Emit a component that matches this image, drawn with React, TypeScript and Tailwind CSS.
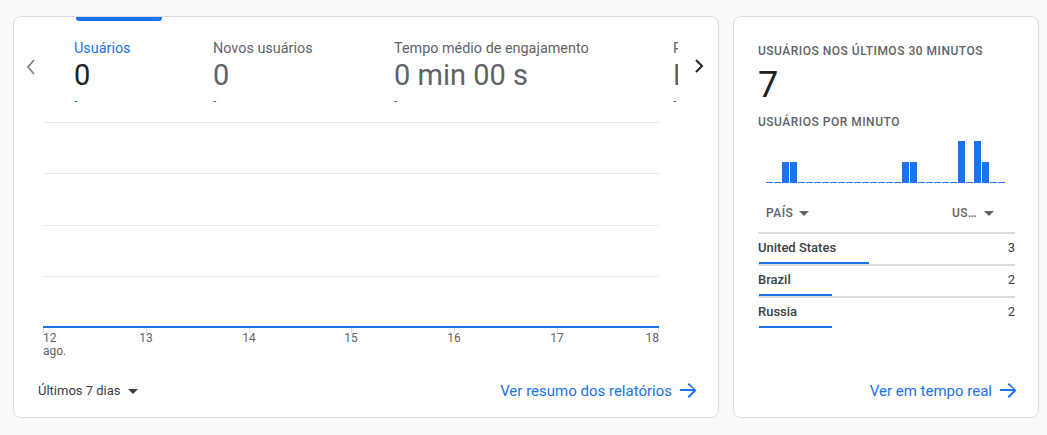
import React from "react";

const bars = [0,0,1,1,0,0,0,0,0,0,0,0,0,0,0,0,0,1,1,0,0,0,0,0,2,0,2,1,0,0];

const metrics = [
  { label: "Usuários", value: "0", w: "w-[139px]", active: true },
  { label: "Novos usuários", value: "0", w: "w-[181px]", active: false },
  { label: "Tempo médio de engajamento", value: "0 min 00 s", w: "w-[279px]", active: false },
  { label: "Receita total", value: "R$ 0,00", w: "w-[200px]", active: false },
];

const ticks = [
  { l: "12", sub: "ago.", x: 0, align: "left" },
  { l: "13", x: 103 },
  { l: "14", x: 206 },
  { l: "15", x: 308 },
  { l: "16", x: 411 },
  { l: "17", x: 514 },
  { l: "18", x: 615, align: "right" },
];

function Arrow() {
  return (
    <svg width="24" height="24" viewBox="0 0 24 24" className="fill-[#1a73e8]">
      <path d="M12 4l-1.41 1.41L16.17 10H3v2h13.17l-5.58 5.59L12 19l7.5-7.5z" />
    </svg>
  );
}

function Caret({ color = "#5f6368" }: { color?: string }) {
  return (
    <svg width="10" height="5" viewBox="0 0 10 5">
      <path d="M0 0l5 5 5-5z" fill={color} />
    </svg>
  );
}

export default function App() {
  return (
    <div
      className="w-[1047px] h-[435px] bg-[#f8f9fa] pt-4 pl-[13px] flex gap-[14px]"
      style={{ fontFamily: "Roboto, 'Noto Sans', sans-serif" }}
    >
      {/* Left card */}
      <div className="relative w-[706px] h-[402px] bg-white border border-[#dadce0] rounded-lg overflow-hidden flex flex-col">
        <div className="absolute top-0 left-[62px] w-[86px] h-[4px] bg-[#1a73e8] rounded-b-[3px]" />
        <div className="flex pt-[22px]">
          <div className="w-[60px] flex items-start justify-start pl-[12px] pt-[20px]">
            <svg width="10" height="16" viewBox="0 0 10 16">
              <path d="M8 1L2 8l6 7" stroke="#80868b" strokeWidth="1.8" fill="none" />
            </svg>
          </div>
          <div className="w-[604px] overflow-hidden flex">
            {metrics.map((m, i) => (
              <div key={i} className={`${m.w} shrink-0 flex flex-col`}>
                <div className={`text-[14.4px] leading-[20px] whitespace-nowrap ${m.active ? "text-[#1a73e8]" : "text-[#5f6368]"}`}>
                  {m.label}
                </div>
                <div className={`text-[29px] leading-[32px] whitespace-nowrap ${m.active ? "text-[#202124]" : "text-[#5f6368]"}`}>
                  {m.value}
                </div>
                <div className={`mt-[2px] text-[12px] leading-[16px] ${m.active ? "text-[#1a73e8]" : "text-[#5f6368]"}`}>-</div>
              </div>
            ))}
          </div>
          <div className="w-[40px] flex items-start justify-center pt-[20px] pl-[2px]">
            <svg width="10" height="14" viewBox="0 0 10 14">
              <path d="M2 1l6 6-6 6" stroke="#202124" strokeWidth="2" fill="none" />
            </svg>
          </div>
        </div>

        {/* Chart */}
        <div className="ml-[29px] w-[616px] mt-[13px] flex flex-col">
          <div className="h-[51px] border-t border-[#e8eaed]" />
          <div className="h-[52px] border-t border-[#e8eaed]" />
          <div className="h-[51px] border-t border-[#e8eaed]" />
          <div className="h-[50px] border-t border-[#e8eaed]" />
          <div className="h-[2px] bg-[#1a73e8]" />
          <div className="relative h-[34px]">
            {ticks.map((t, i) => (
              <div key={i} className="absolute top-0 h-[5px] w-px bg-[#dadce0]" style={{ left: t.x }} />
            ))}
            {ticks.map((t, i) => (
              <div
                key={"l" + i}
                className="absolute top-[4px] text-[12px] leading-[13px] text-[#5f6368]"
                style={
                  t.align === "left"
                    ? { left: t.x }
                    : t.align === "right"
                    ? { right: 0 }
                    : { left: t.x, transform: "translateX(-50%)" }
                }
              >
                <div>{t.l}</div>
                {t.sub && <div>{t.sub}</div>}
              </div>
            ))}
          </div>
        </div>

        <div className="flex items-center justify-between pl-[24px] pr-[17px] mt-[17px]">
          <div className="flex items-center gap-[7px] text-[13px] text-[#3c4043]">
            <span>Últimos 7 dias</span>
            <Caret color="#3c4043" />
          </div>
          <div className="flex items-center gap-[5px] text-[15px] text-[#1a73e8]">
            <span>Ver resumo dos relatórios</span>
            <Arrow />
          </div>
        </div>
      </div>

      {/* Right card */}
      <div className="w-[306px] h-[402px] bg-white border border-[#dadce0] rounded-lg flex flex-col pl-[24px] pr-[23px] pt-[26px]">
        <div className="text-[12px] leading-[16px] font-medium tracking-[0.5px] text-[#5f6368] whitespace-nowrap">
          USUÁRIOS NOS ÚLTIMOS 30 MINUTOS
        </div>
        <div className="text-[36px] leading-[40px] text-[#202124] mt-[6px]">7</div>
        <div className="text-[12px] leading-[16px] font-medium tracking-[0.5px] text-[#5f6368] mt-[9px]">
          USUÁRIOS POR MINUTO
        </div>
        <div className="ml-[8px] mt-[11px] h-[42px] flex items-end gap-px">
          {bars.map((v, i) => (
            <div
              key={i}
              className="w-[7px] bg-[#1a73e8]"
              style={{ height: v === 0 ? 1 : v * 21 }}
            />
          ))}
        </div>

        <div className="mt-[22px] flex items-center justify-between pl-[8px] pr-[21px] h-[16px] text-[12px] font-medium tracking-[0.5px] text-[#5f6368]">
          <div className="flex items-center gap-[6px]">
            <span>PAÍS</span>
            <Caret />
          </div>
          <div className="flex items-center gap-[7px]">
            <span>US…</span>
            <Caret />
          </div>
        </div>
        <div className="mt-[11px] h-[2px] bg-[#dadce0]" />
        {[
          { c: "United States", v: 3, w: 110 },
          { c: "Brazil", v: 2, w: 73 },
          { c: "Russia", v: 2, w: 73 },
        ].map((r, i, arr) => (
          <div key={i} className="flex flex-col pt-[6px]">
            <div className="flex justify-between h-[16px] items-center text-[13px] font-medium text-[#3c4043]">
              <span>{r.c}</span>
              <span className="font-normal">{r.v}</span>
            </div>
            <div className="mt-[6px] ml-px h-[2px] bg-[#1a73e8]" style={{ width: r.w }} />
            {i < arr.length - 1 && <div className="h-[2px] bg-[#dadce0]" />}
          </div>
        ))}

        <div className="mt-auto mb-[14px] flex items-center justify-end gap-[5px] text-[15px] text-[#1a73e8] mr-[-6px]">
          <span>Ver em tempo real</span>
          <Arrow />
        </div>
      </div>
    </div>
  );
}
